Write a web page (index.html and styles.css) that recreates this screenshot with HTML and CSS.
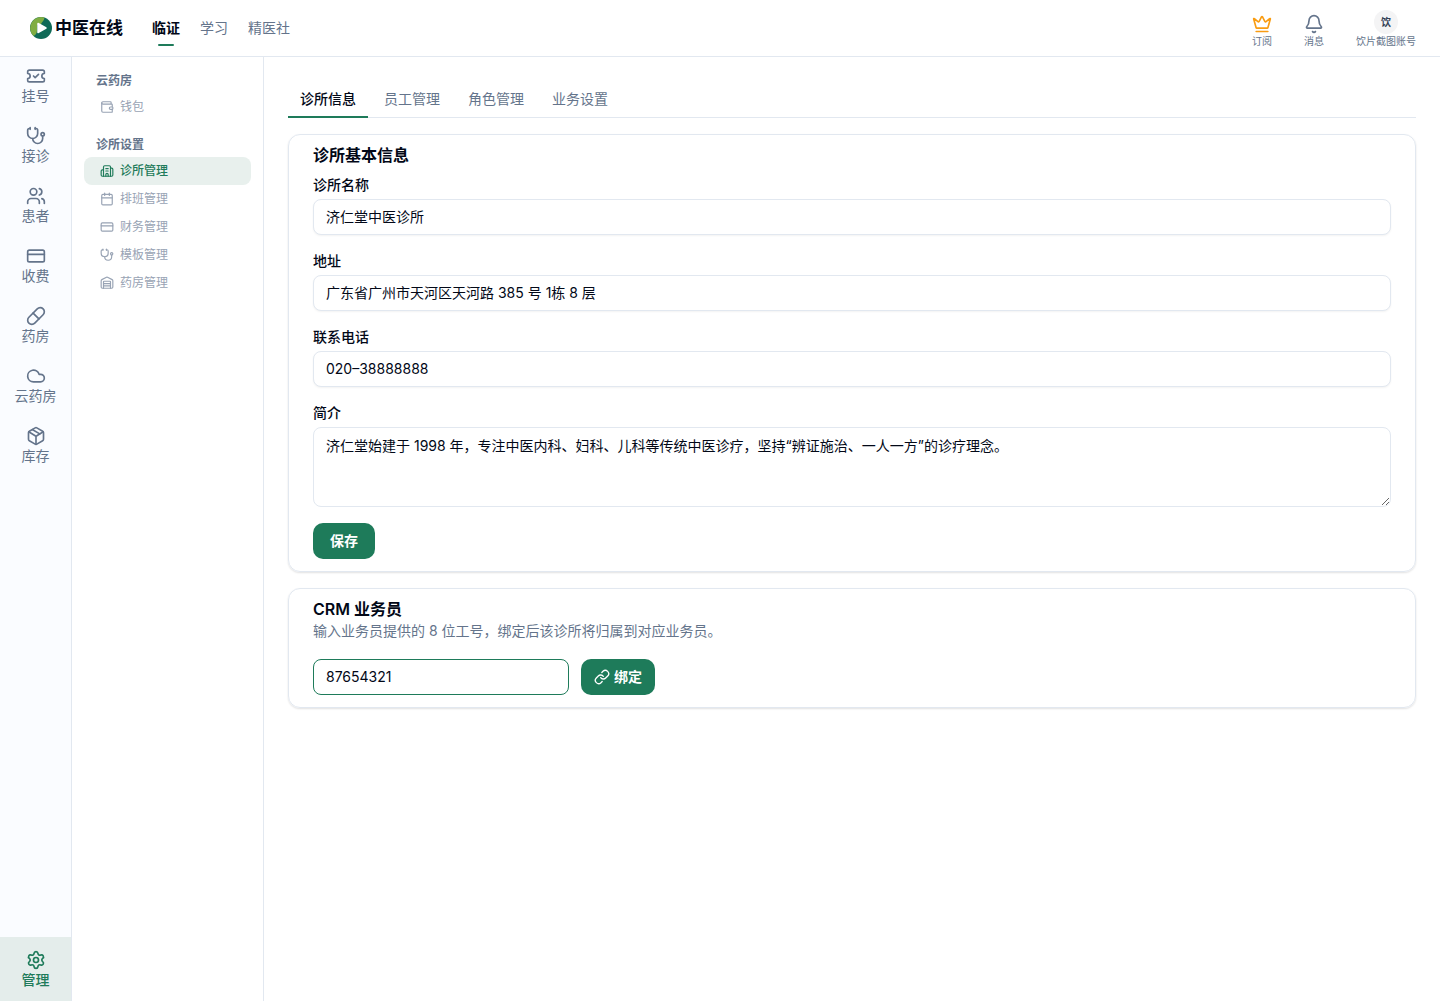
FILE: index.html
```html
<!DOCTYPE html>
<html lang="zh-CN">
<head>
<meta charset="utf-8">
<meta name="viewport" content="width=device-width, initial-scale=1">
<title>中医在线 - 诊所管理</title>
<link rel="stylesheet" href="styles.css">
</head>
<body>
<svg class="sprite" aria-hidden="true">
  <symbol id="ticket" viewBox="0 0 24 24"><path d="M2 9a3 3 0 1 1 0 6v2a2 2 0 0 0 2 2h16a2 2 0 0 0 2-2v-2a3 3 0 1 1 0-6V7a2 2 0 0 0-2-2H4a2 2 0 0 0-2 2Z"/><path d="m9 12 2 2 4-4"/></symbol>
  <symbol id="stethoscope" viewBox="0 0 24 24"><path d="M11 2v2"/><path d="M5 2v2"/><path d="M5 3H4a2 2 0 0 0-2 2v4a6 6 0 0 0 12 0V5a2 2 0 0 0-2-2h-1"/><path d="M8 15a6 6 0 0 0 12 0v-3"/><circle cx="20" cy="10" r="2"/></symbol>
  <symbol id="users" viewBox="0 0 24 24"><path d="M16 21v-2a4 4 0 0 0-4-4H6a4 4 0 0 0-4 4v2"/><circle cx="9" cy="7" r="4"/><path d="M22 21v-2a4 4 0 0 0-3-3.87"/><path d="M16 3.13a4 4 0 0 1 0 7.75"/></symbol>
  <symbol id="card" viewBox="0 0 24 24"><rect width="20" height="14" x="2" y="5" rx="2"/><path d="M2 10h20"/></symbol>
  <symbol id="pill" viewBox="0 0 24 24"><path d="m10.5 20.5 10-10a4.95 4.95 0 1 0-7-7l-10 10a4.95 4.95 0 1 0 7 7Z"/><path d="m8.5 8.5 7 7"/></symbol>
  <symbol id="cloud" viewBox="0 0 24 24"><path d="M17.5 19H9a7 7 0 1 1 6.71-9h1.79a4.5 4.5 0 1 1 0 9Z"/></symbol>
  <symbol id="package" viewBox="0 0 24 24"><path d="M11 21.73a2 2 0 0 0 2 0l7-4A2 2 0 0 0 21 16V8a2 2 0 0 0-1-1.73l-7-4a2 2 0 0 0-2 0l-7 4A2 2 0 0 0 3 8v8a2 2 0 0 0 1 1.73z"/><path d="M12 22V12"/><path d="m3.3 7 7.7 4.73a2 2 0 0 0 2 0L20.7 7"/><path d="m7.5 4.27 9 5.15"/></symbol>
  <symbol id="settings" viewBox="0 0 24 24"><path d="M9.671 4.136a2.34 2.34 0 0 1 4.659 0 2.34 2.34 0 0 0 3.319 1.915 2.34 2.34 0 0 1 2.33 4.033 2.34 2.34 0 0 0 0 3.831 2.34 2.34 0 0 1-2.33 4.033 2.34 2.34 0 0 0-3.319 1.915 2.34 2.34 0 0 1-4.659 0 2.34 2.34 0 0 0-3.32-1.915 2.34 2.34 0 0 1-2.33-4.033 2.34 2.34 0 0 0 0-3.831A2.34 2.34 0 0 1 6.35 6.051a2.34 2.34 0 0 0 3.319-1.915"/><circle cx="12" cy="12" r="3"/></symbol>
  <symbol id="wallet" viewBox="0 0 24 24"><path d="M19 7V4a1 1 0 0 0-1-1H5a2 2 0 0 0 0 4h15a1 1 0 0 1 1 1v4h-3a2 2 0 0 0 0 4h3a1 1 0 0 0 1-1v-2a1 1 0 0 0-1-1"/><path d="M3 5v14a2 2 0 0 0 2 2h15a1 1 0 0 0 1-1v-4"/></symbol>
  <symbol id="hospital" viewBox="0 0 24 24"><path d="M10 12h4"/><path d="M10 8h4"/><path d="M14 21v-3a2 2 0 0 0-4 0v3"/><path d="M6 10H4a2 2 0 0 0-2 2v7a2 2 0 0 0 2 2h16a2 2 0 0 0 2-2V9a2 2 0 0 0-2-2h-2"/><path d="M6 21V5a2 2 0 0 1 2-2h8a2 2 0 0 1 2 2v16"/></symbol>
  <symbol id="calendar" viewBox="0 0 24 24"><path d="M8 2v4"/><path d="M16 2v4"/><rect width="18" height="18" x="3" y="4" rx="2"/><path d="M3 10h18"/></symbol>
  <symbol id="warehouse" viewBox="0 0 24 24"><path d="M18 21V10a1 1 0 0 0-1-1H7a1 1 0 0 0-1 1v11"/><path d="M22 19a2 2 0 0 1-2 2H4a2 2 0 0 1-2-2V8a2 2 0 0 1 1.132-1.803l7.95-3.974a2 2 0 0 1 1.837 0l7.948 3.974A2 2 0 0 1 22 8z"/><path d="M6 13h12"/><path d="M6 17h12"/></symbol>
  <symbol id="crown" viewBox="0 0 24 24"><path d="M11.562 3.266a.5.5 0 0 1 .876 0L15.39 8.87a1 1 0 0 0 1.516.294L21.183 5.5a.5.5 0 0 1 .798.519l-2.834 10.246a1 1 0 0 1-.956.734H5.81a1 1 0 0 1-.957-.734L2.02 6.02a.5.5 0 0 1 .798-.519l4.276 3.664a1 1 0 0 0 1.516-.294z"/><path d="M5 21h14"/></symbol>
  <symbol id="bell" viewBox="0 0 24 24"><path d="M10.268 21a2 2 0 0 0 3.464 0"/><path d="M3.262 15.326A1 1 0 0 0 4 17h16a1 1 0 0 0 .74-1.673C19.41 13.956 18 12.499 18 8A6 6 0 0 0 6 8c0 4.499-1.411 5.956-2.738 7.326"/></symbol>
  <symbol id="link" viewBox="0 0 24 24"><path d="M10 13a5 5 0 0 0 7.54.54l3-3a5 5 0 0 0-7.07-7.07l-1.72 1.71"/><path d="M14 11a5 5 0 0 0-7.54-.54l-3 3a5 5 0 0 0 7.07 7.07l1.71-1.71"/></symbol>
</svg>

<header class="topbar">
  <a class="brand" href="#">
    <svg class="brand-mark" viewBox="0 0 22 22" aria-hidden="true">
      <circle cx="11" cy="11" r="11" fill="#0f6a57"/>
      <path d="M14.5.6A11 11 0 0 0 3.500 19C6 18 7 16 7 13V8L11 7C12 5 14 4 14.500.6Z" fill="#7fad42"/>
      <path d="M8 6.500v9l8-4.500Z" fill="#fff" stroke="#fff" stroke-width="1.500" stroke-linejoin="round"/>
    </svg>
    <span>中医在线</span>
  </a>
  <nav class="topnav" aria-label="主导航">
    <a class="active" href="#">临证</a>
    <a href="#">学习</a>
    <a href="#">精医社</a>
  </nav>
  <div class="account">
    <button type="button"><svg class="icon crown"><use href="#crown"/></svg><span>订阅</span></button>
    <button type="button"><svg class="icon"><use href="#bell"/></svg><span>消息</span></button>
    <button type="button"><span class="avatar">饮</span><span>饮片截图账号</span></button>
  </div>
</header>

<div class="shell">
  <nav class="rail" aria-label="功能">
    <div class="rail-list">
      <a href="#"><svg class="icon"><use href="#ticket"/></svg>挂号</a>
      <a href="#"><svg class="icon"><use href="#stethoscope"/></svg>接诊</a>
      <a href="#"><svg class="icon"><use href="#users"/></svg>患者</a>
      <a href="#"><svg class="icon"><use href="#card"/></svg>收费</a>
      <a href="#"><svg class="icon"><use href="#pill"/></svg>药房</a>
      <a href="#"><svg class="icon"><use href="#cloud"/></svg>云药房</a>
      <a href="#"><svg class="icon"><use href="#package"/></svg>库存</a>
    </div>
    <a class="rail-manage" href="#"><svg class="icon"><use href="#settings"/></svg>管理</a>
  </nav>

  <nav class="sidebar" aria-label="管理">
    <section>
      <h2>云药房</h2>
      <a href="#"><svg class="icon"><use href="#wallet"/></svg>钱包</a>
    </section>
    <section>
      <h2>诊所设置</h2>
      <a class="active" href="#"><svg class="icon"><use href="#hospital"/></svg>诊所管理</a>
      <a href="#"><svg class="icon"><use href="#calendar"/></svg>排班管理</a>
      <a href="#"><svg class="icon"><use href="#card"/></svg>财务管理</a>
      <a href="#"><svg class="icon"><use href="#stethoscope"/></svg>模板管理</a>
      <a href="#"><svg class="icon"><use href="#warehouse"/></svg>药房管理</a>
    </section>
  </nav>

  <main class="content">
    <div class="tabs" role="tablist">
      <button type="button" role="tab" aria-selected="true">诊所信息</button>
      <button type="button" role="tab" aria-selected="false">员工管理</button>
      <button type="button" role="tab" aria-selected="false">角色管理</button>
      <button type="button" role="tab" aria-selected="false">业务设置</button>
    </div>

    <form class="card">
      <h1>诊所基本信息</h1>
      <div class="fields">
        <div class="field"><label for="name">诊所名称</label><input id="name" type="text" value="济仁堂中医诊所"></div>
        <div class="field"><label for="address">地址</label><input id="address" type="text" value="广东省广州市天河区天河路 385 号 1栋 8 层"></div>
        <div class="field"><label for="phone">联系电话</label><input id="phone" type="text" value="020–38888888"></div>
        <div class="field"><label for="intro">简介</label><textarea id="intro">济仁堂始建于 1998 年，专注中医内科、妇科、儿科等传统中医诊疗，坚持“辨证施治、一人一方”的诊疗理念。</textarea></div>
        <button class="primary" type="button">保存</button>
      </div>
    </form>

    <form class="card">
      <h1><label for="crm">CRM 业务员</label></h1>
      <p>输入业务员提供的 8 位工号，绑定后该诊所将归属到对应业务员。</p>
      <div class="bind">
        <input id="crm" class="highlight" type="text" value="87654321">
        <button class="primary with-icon" type="button"><svg class="icon"><use href="#link"/></svg>绑定</button>
      </div>
    </form>
  </main>
</div>
</body>
</html>
```
FILE: styles.css
```css
:root {
  --ink: #020817;
  --muted: #64748b;
  --faint: #98a3b4;
  --line: #e2e8f0;
  --green: #1e7b5a;
}

* { box-sizing: border-box; }

body {
  margin: 0;
  min-height: 100vh;
  display: flex;
  flex-direction: column;
  color: var(--ink);
  background: #fff;
  font: 14px/20px Inter, "Noto Sans CJK SC", sans-serif;
}

a { color: inherit; text-decoration: none; }
h1, h2, p { margin: 0; }
button, input, textarea { font: inherit; color: inherit; }
button { padding: 0; border: 0; background: none; cursor: pointer; }

.sprite { display: none; }

.icon {
  flex: none;
  width: 20px;
  height: 20px;
  fill: none;
  stroke: currentColor;
  stroke-width: 2;
  stroke-linecap: round;
  stroke-linejoin: round;
}

/* Top bar */
.topbar {
  display: flex;
  align-items: center;
  height: 57px;
  padding: 0 24px 0 30px;
  border-bottom: 1px solid var(--line);
}

.brand {
  display: flex;
  align-items: center;
  gap: 3px;
  margin-right: 29px;
  font-size: 17px;
  font-weight: 600;
}

.brand-mark { width: 22px; height: 22px; }

.topnav { display: flex; gap: 20px; color: var(--muted); }
.topnav a { position: relative; }
.topnav .active { color: var(--ink); font-weight: 600; }

.topnav .active::after {
  content: "";
  position: absolute;
  left: 6px;
  right: 6px;
  bottom: -8px;
  height: 2px;
  border-radius: 2px;
  background: var(--green);
}

.account {
  display: flex;
  align-items: flex-end;
  gap: 32px;
  margin-left: auto;
  padding-top: 1px;
  color: var(--muted);
}

.account button {
  display: flex;
  flex-direction: column;
  align-items: center;
  gap: 1px;
  font-size: 10px;
  line-height: 12px;
}

.crown { color: #f99c12; }

.avatar {
  width: 24px;
  height: 24px;
  border-radius: 50%;
  background: #f4f4f5;
  color: #334155;
  font-weight: 600;
  line-height: 24px;
  text-align: center;
}

/* Left rail */
.shell { flex: 1; display: flex; }

.rail {
  flex: none;
  display: flex;
  flex-direction: column;
  justify-content: space-between;
  width: 72px;
  border-right: 1px solid var(--line);
  background: #fafcff;
  color: var(--muted);
}

.rail-list { display: grid; gap: 20px; padding-top: 9px; }

.rail a {
  display: flex;
  flex-direction: column;
  align-items: center;
}

.rail .rail-manage {
  padding: 13px 0 11px;
  background: #e4edeb;
  color: var(--green);
  font-weight: 500;
}

/* Section menu */
.sidebar {
  flex: none;
  display: flex;
  flex-direction: column;
  gap: 12px;
  width: 192px;
  padding: 12px;
  border-right: 1px solid var(--line);
  font-size: 12px;
}

.sidebar h2 {
  padding: 4px 12px;
  color: var(--muted);
  font-size: 12px;
  font-weight: 600;
  line-height: 16px;
}

.sidebar a {
  display: flex;
  align-items: center;
  gap: 6px;
  height: 28px;
  padding: 0 16px;
  border-radius: 8px;
  color: var(--faint);
}

.sidebar .icon { width: 14px; height: 14px; }
.sidebar .active { background: #e8f0ed; color: var(--green); font-weight: 500; }

/* Page content */
.content {
  flex: 1;
  min-width: 0;
  display: flex;
  flex-direction: column;
  gap: 16px;
  padding: 24px;
}

.tabs {
  display: flex;
  gap: 4px;
  border-bottom: 1px solid var(--line);
  color: var(--muted);
}

.tabs button {
  height: 37px;
  margin-bottom: -1px;
  padding: 0 12px;
  border-bottom: 2px solid transparent;
}

.tabs [aria-selected="true"] {
  border-color: var(--green);
  color: var(--ink);
  font-weight: 500;
}

.card {
  padding: 8px 24px 12px;
  border: 1px solid var(--line);
  border-radius: 12px;
  box-shadow: 0 1px 2px rgb(0 0 0 / 12%);
}

.card h1 { font-size: 16px; font-weight: 600; line-height: 24px; }
.card p { color: var(--muted); }

.fields { display: grid; gap: 16px; margin-top: 8px; }
.field { display: grid; gap: 4px; }
.field label { font-weight: 500; }

input, textarea {
  width: 100%;
  border: 1px solid var(--line);
  border-radius: 8px;
  background: #fff;
  outline: 0;
  box-shadow: 0 1px 2px rgb(0 0 0 / 5%);
}

input { height: 36px; padding: 6px 12px 8px; }
textarea { display: block; height: 80px; padding: 8px 12px; resize: vertical; box-shadow: none; }

.primary {
  justify-self: start;
  height: 36px;
  padding: 0 17px;
  border-radius: 10px;
  background: var(--green);
  color: #fff;
  font-weight: 600;
}

.with-icon { display: flex; align-items: center; gap: 4px; padding: 0 13px; }
.with-icon .icon { width: 16px; height: 16px; }

.bind { display: flex; gap: 12px; margin-top: 18px; }
.bind input { width: 256px; }
.bind .highlight { border-color: var(--green); box-shadow: none; }
```
